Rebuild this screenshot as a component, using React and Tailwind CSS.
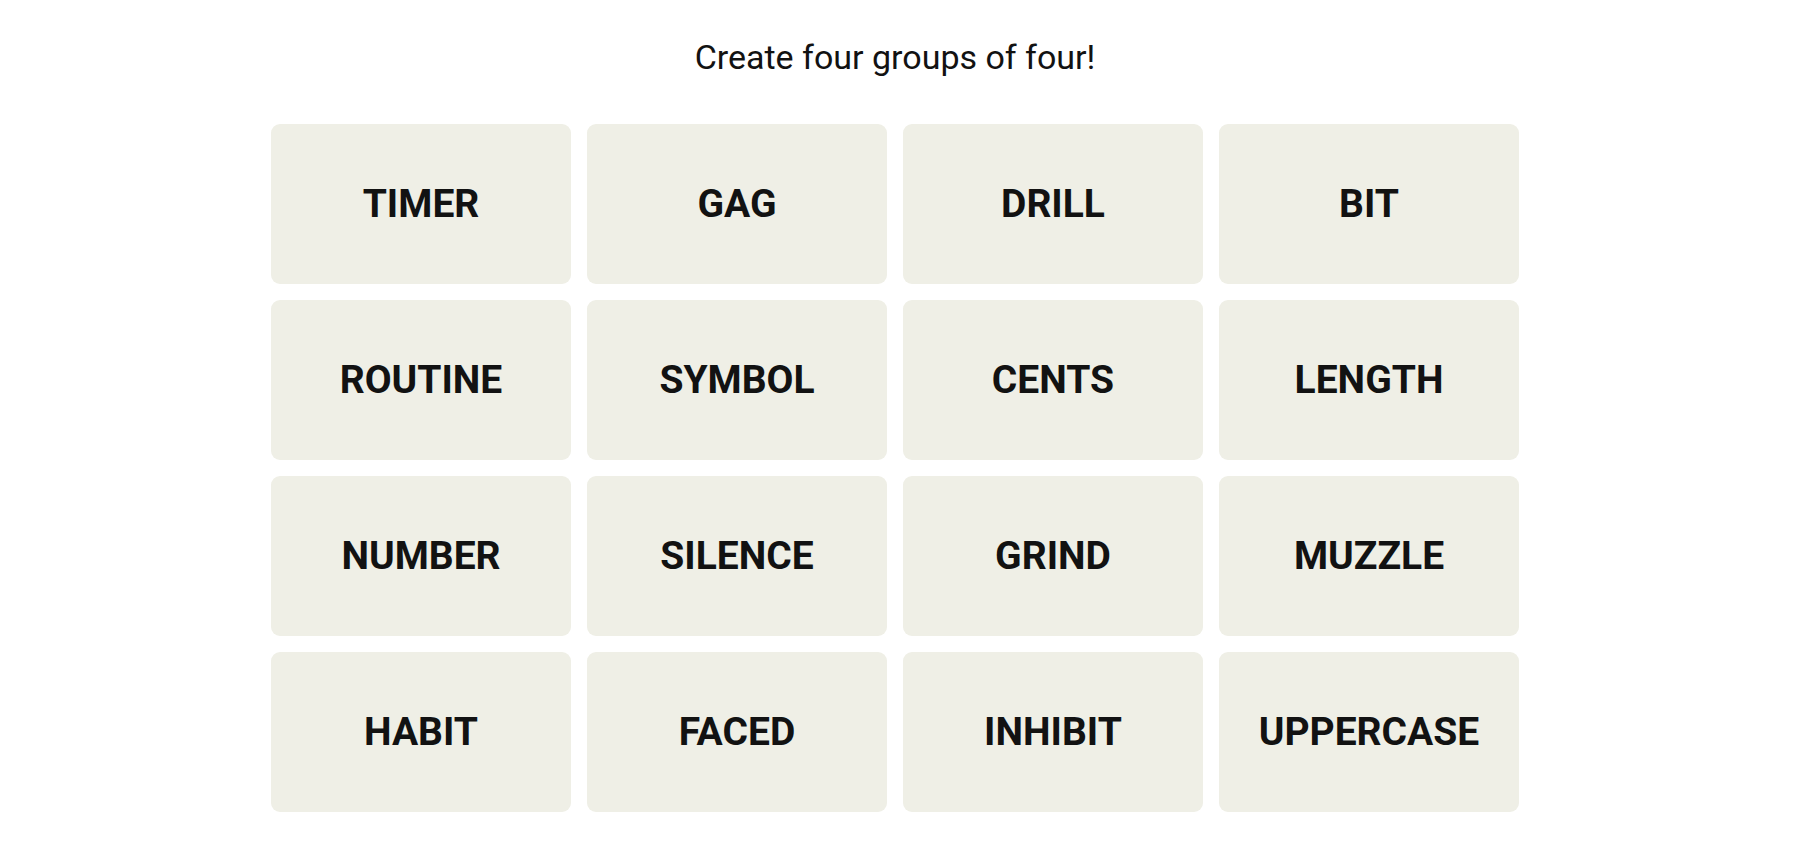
export default function App() {
  const words = [
    "TIMER", "GAG", "DRILL", "BIT",
    "ROUTINE", "SYMBOL", "CENTS", "LENGTH",
    "NUMBER", "SILENCE", "GRIND", "MUZZLE",
    "HABIT", "FACED", "INHIBIT", "UPPERCASE",
  ];
  return (
    <div className="w-[1790px] min-h-[850px] bg-white flex flex-col items-center pt-[37px]">
      <h1 className="text-[34px] leading-[40px] text-[#121212] font-normal font-['Roboto',sans-serif]">
        Create four groups of four!
      </h1>
      <div className="mt-[47px] grid grid-cols-[repeat(4,300px)] gap-4">
        {words.map((w) => (
          <div
            key={w}
            className="h-[160px] rounded-[9px] bg-[#efefe6] flex items-center justify-center text-[39px] font-bold text-[#121212] font-['Roboto',sans-serif]"
          >
            {w}
          </div>
        ))}
      </div>
    </div>
  );
}
